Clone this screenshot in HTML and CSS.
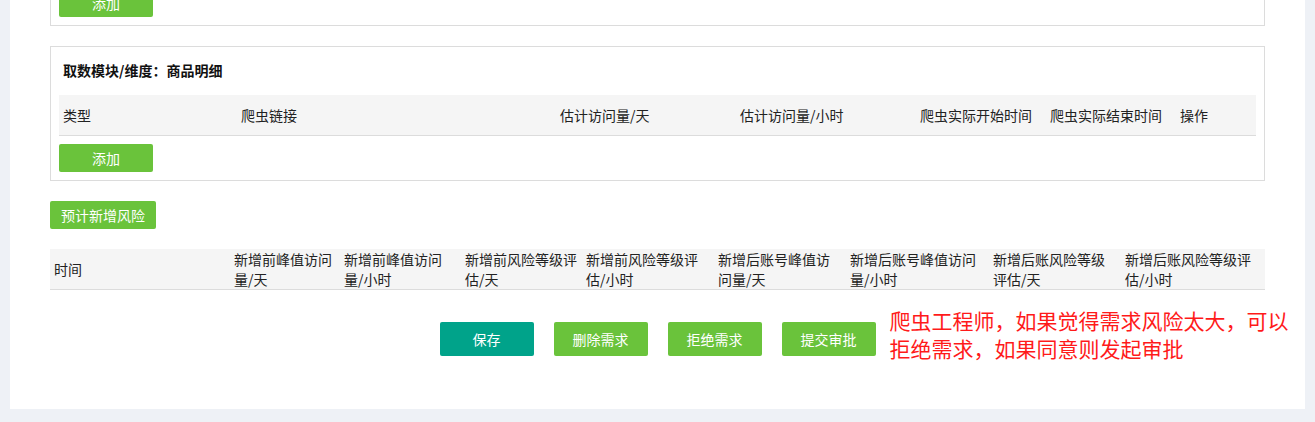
FILE: index.html
```html
<!DOCTYPE html>
<html lang="zh-CN">
<head>
<meta charset="utf-8">
<title>爬虫需求</title>
<link rel="stylesheet" href="styles.css">
</head>
<body>
<div class="panel">
  <section class="card">
    <button class="btn btn-green btn-add">添加</button>
  </section>

  <section class="card">
    <h3 class="card-title">取数模块/维度：商品明细</h3>
    <table class="grid">
      <colgroup>
        <col class="w-type"><col class="w-link"><col class="w-day"><col class="w-hour"><col class="w-start"><col class="w-end"><col class="w-op">
      </colgroup>
      <thead>
        <tr>
          <th>类型</th>
          <th>爬虫链接</th>
          <th>估计访问量/天</th>
          <th>估计访问量/小时</th>
          <th>爬虫实际开始时间</th>
          <th>爬虫实际结束时间</th>
          <th>操作</th>
        </tr>
      </thead>
    </table>
    <button class="btn btn-green btn-add">添加</button>
  </section>

  <button class="btn btn-green btn-risk">预计新增风险</button>

  <table class="grid risk">
    <colgroup>
      <col class="r1"><col class="r2"><col class="r3"><col class="r4"><col class="r5"><col class="r6"><col class="r7"><col class="r8"><col class="r9">
    </colgroup>
    <thead>
      <tr>
        <th>时间</th>
        <th>新增前峰值访问<br>量/天</th>
        <th>新增前峰值访问<br>量/小时</th>
        <th>新增前风险等级评<br>估/天</th>
        <th>新增前风险等级评<br>估/小时</th>
        <th>新增后账号峰值访<br>问量/天</th>
        <th>新增后账号峰值访问<br>量/小时</th>
        <th>新增后账风险等级<br>评估/天</th>
        <th>新增后账风险等级评<br>估/小时</th>
      </tr>
    </thead>
  </table>

  <div class="actions">
    <div class="btn-group">
      <button class="btn btn-teal btn-act">保存</button>
      <button class="btn btn-green btn-act">删除需求</button>
      <button class="btn btn-green btn-act">拒绝需求</button>
      <button class="btn btn-green btn-act">提交审批</button>
      <p class="note">爬虫工程师，如果觉得需求风险太大，可以拒绝需求，如果同意则发起审批</p>
    </div>
  </div>
</div>
</body>
</html>
```

FILE: styles.css
```css
html, body {
  margin: 0;
  padding: 0;
  background: #eef1f6;
  font-family: "Microsoft YaHei", "Noto Sans CJK SC", "Noto Sans", sans-serif;
  font-size: 14px;
  color: #222;
}

.panel {
  margin: -20px 10px 0 10px;
  background: #fff;
  padding: 0 40px 53px 40px;
}

.card {
  border: 1px solid #dcdcdc;
  padding: 8px;
  margin-bottom: 20px;
}

.card-title {
  margin: 0 0 8px 4px;
  font-size: 14px;
  font-weight: bold;
  line-height: 31px;
  padding-bottom: 1px;
  color: #111;
}

.btn {
  display: block;
  border: 0;
  border-radius: 2px;
  color: #fff;
  font-family: inherit;
  font-size: 14px;
  padding: 0;
  cursor: pointer;
}

.btn-green { background: #6ac33b; }
.btn-teal { background: #00a38a; }

.btn-add {
  width: 94px;
  height: 28px;
}

.card .grid + .btn-add { margin-top: 8px; }

.btn-risk {
  width: 106px;
  height: 28px;
  margin-bottom: 20px;
}

.grid {
  width: 100%;
  border-collapse: collapse;
  table-layout: fixed;
}

.grid th {
  background: #f5f5f5;
  border-bottom: 1px solid #dcdcdc;
  text-align: left;
  font-weight: normal;
  font-size: 14px;
  color: #222;
  padding: 0 4px;
  height: 40px;
  line-height: 20px;
  white-space: nowrap;
  vertical-align: middle;
}

.w-type { width: 178px; }
.w-link { width: 319px; }
.w-day { width: 180px; }
.w-hour { width: 180px; }
.w-start { width: 130px; }
.w-end { width: 130px; }
.w-op { width: 80px; }

.r1 { width: 180px; }
.r2 { width: 110px; }
.r3 { width: 121px; }
.r4 { width: 121px; }
.r5 { width: 132px; }
.r6 { width: 132px; }
.r7 { width: 143px; }
.r8 { width: 132px; }
.r9 { width: 144px; }

.actions {
  margin-top: 32px;
  display: flex;
  justify-content: center;
}

.btn-group {
  position: relative;
  display: flex;
  gap: 20px;
}

.btn-act {
  width: 94px;
  height: 34px;
}

.note {
  position: absolute;
  left: calc(100% + 14px);
  top: -16px;
  width: 405px;
  margin: 0;
  color: #ff1a1a;
  font-size: 21px;
  line-height: 28px;
}
```
